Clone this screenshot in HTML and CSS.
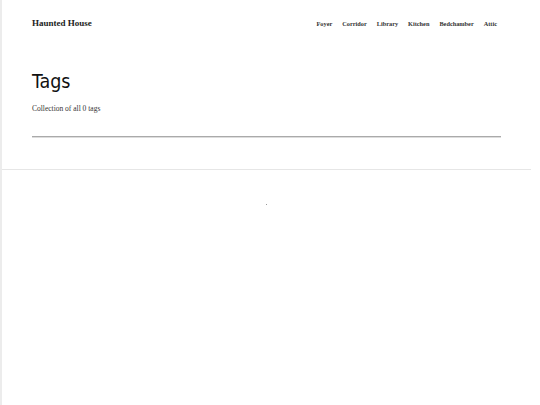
FILE: index.html
```html
<!DOCTYPE html>
<html lang="en">
<head>
<meta charset="utf-8">
<title>Tags – Haunted House</title>
<link rel="stylesheet" href="styles.css">
</head>
<body>
<div class="page">
  <header class="site-header">
    <a class="site-title" href="#">Haunted House</a>
    <nav class="site-nav">
      <a href="#">Foyer</a>
      <a href="#">Corridor</a>
      <a href="#">Library</a>
      <a href="#">Kitchen</a>
      <a href="#">Bedchamber</a>
      <a href="#">Attic</a>
    </nav>
  </header>
  <main class="content">
    <h1 class="title">Tags</h1>
    <p class="desc">Collection of all 0 tags</p>
    <hr class="rule">
  </main>
  <footer class="site-footer">
    <span class="dot"></span>
  </footer>
</div>
</body>
</html>
```

FILE: styles.css
```css
html, body {
  margin: 0;
  padding: 0;
  background: #fff;
}
body {
  font-family: "Liberation Serif", "DejaVu Serif", serif;
  color: #222;
}
.page {
  min-height: 405px;
  border-left: 2px solid #ececec;
  width: 529px;
  box-sizing: content-box;
}
.site-header {
  display: flex;
  justify-content: space-between;
  align-items: center;
  padding: 17px 34px 0 30px;
  height: 12px;
}
.site-title {
  font-size: 9px;
  font-weight: bold;
  color: #222;
  text-decoration: none;
}
.site-nav {
  display: flex;
  gap: 10px;
}
.site-nav a {
  font-size: 6.3px;
  font-weight: bold;
  color: #333;
  text-decoration: none;
}
.content {
  padding: 0 30px 0 30px;
}
.title {
  font-family: "DejaVu Sans Condensed", "Noto Sans", sans-serif;
  font-weight: 400;
  font-size: 19.5px;
  color: #111;
  margin: 41px 0 0 0;
  line-height: 23px;
}
.desc {
  font-size: 7.5px;
  margin: 11px 0 0 0;
  color: #333;
  line-height: 10px;
}
.rule {
  margin: 22px 0 0 0;
  border: 0;
  height: 1px;
  background: #aaa;
  border-bottom: 1px solid #ddd;
}
.site-footer {
  margin-top: 31px;
  border-top: 1px solid #e6e6e6;
  height: 60px;
  display: flex;
  justify-content: center;
  padding-top: 34px;
  box-sizing: border-box;
}
.dot {
  width: 1px;
  height: 1px;
  background: #999;
}
```
